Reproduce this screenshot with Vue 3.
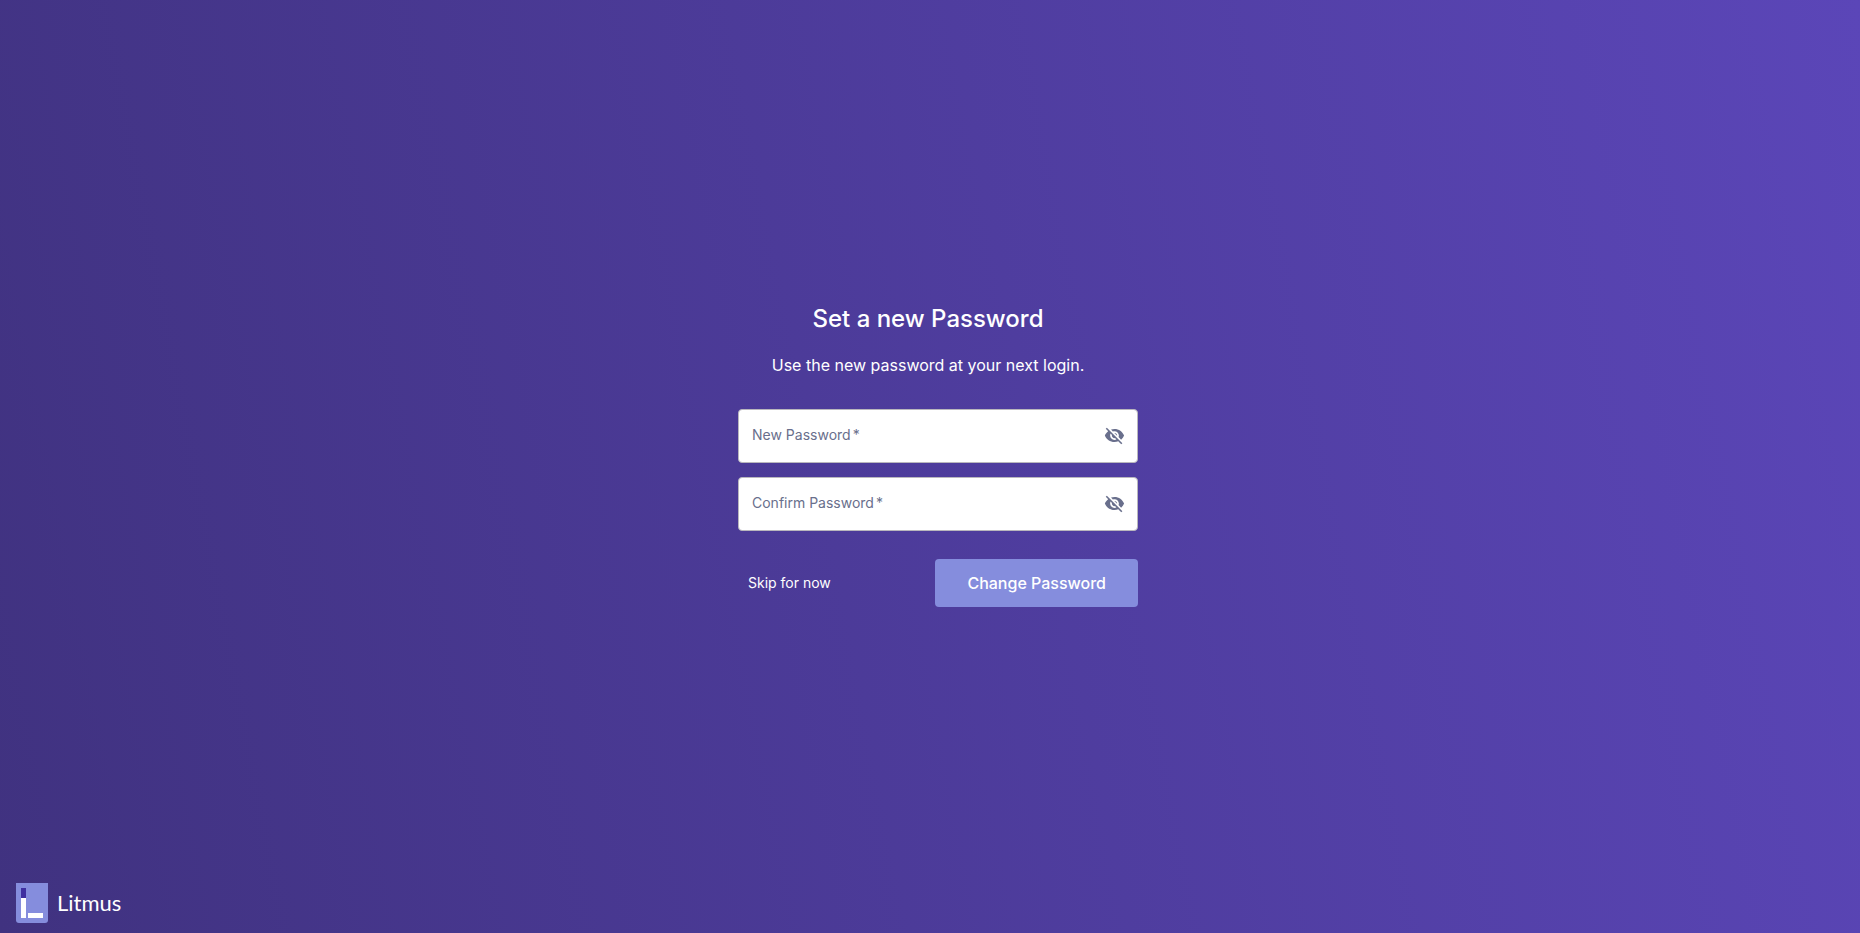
<script setup>
import { ref } from 'vue'

const fields = ref([
  { id: 'new-password', label: 'New Password', value: '', visible: false },
  { id: 'confirm-password', label: 'Confirm Password', value: '', visible: false },
])
</script>

<template>
  <div class="page">
    <main class="content">
      <header class="heading">
        <h1>Set a new Password</h1>
        <p>Use the new password at your next login.</p>
      </header>
      <form class="form" @submit.prevent>
        <div v-for="field in fields" :key="field.id" class="field">
          <div class="control">
            <input
              :id="field.id"
              v-model="field.value"
              :type="field.visible ? 'text' : 'password'"
              placeholder=" "
              required
            />
            <label :for="field.id">{{ field.label }}<span class="star">*</span></label>
          </div>
          <button
            type="button"
            class="toggle"
            aria-label="Toggle password visibility"
            @click="field.visible = !field.visible"
          >
            <svg viewBox="0 0 24 24" aria-hidden="true">
              <path
                d="M12 7c2.76 0 5 2.24 5 5 0 .65-.13 1.26-.36 1.83l2.92 2.92c1.51-1.26 2.7-2.89 3.43-4.75-1.73-4.39-6-7.5-11-7.5-1.4 0-2.74.25-3.98.7l2.16 2.16C10.74 7.13 11.35 7 12 7zM2 4.27l2.28 2.28.46.46C3.08 8.3 1.78 10.02 1 12c1.73 4.39 6 7.5 11 7.5 1.55 0 3.03-.3 4.38-.84l.42.42L19.73 22 21 20.73 3.27 3 2 4.27zM7.53 9.8l1.55 1.55c-.05.21-.08.43-.08.65 0 1.66 1.34 3 3 3 .22 0 .44-.03.65-.08l1.55 1.55c-.67.33-1.41.53-2.2.53-2.76 0-5-2.24-5-5 0-.79.2-1.53.53-2.2zm4.31-.78l3.15 3.15.02-.16c0-1.66-1.34-3-3-3l-.17.01z"
              />
            </svg>
          </button>
        </div>
        <div class="actions">
          <button type="button" class="skip">Skip for now</button>
          <button type="submit" class="submit">Change Password</button>
        </div>
      </form>
    </main>
    <footer class="brand">
      <svg class="mark" viewBox="0 0 32 40" aria-hidden="true">
        <path fill="#858ddd" d="M0 0h32v37a3 3 0 0 1-3 3H3a3 3 0 0 1-3-3z" />
        <path fill="#3f2fa0" d="M5 5h5v10H5z" />
        <path fill="#fff" d="M5 15h5v20H5zM12 30h15v5H12z" />
      </svg>
      <span class="name">Litmus</span>
    </footer>
  </div>
</template>

<style>
body {
  margin: 0;
}
</style>

<style scoped>
.page {
  box-sizing: border-box;
  min-height: 100vh;
  display: grid;
  grid-template-rows: 1fr auto;
  padding: 0 16px 10px;
  background: linear-gradient(79deg, #403280 0%, #5b46b8 100%);
  color: #fff;
  font-family: Inter, "Liberation Sans", sans-serif;
}

.content {
  display: flex;
  flex-direction: column;
  align-items: center;
  justify-content: center;
  padding-top: 26px;
}

.heading {
  text-align: center;
  margin-right: 4px;
}

h1 {
  margin: 0;
  font-size: 24px;
  line-height: 32px;
  font-weight: 500;
}

p {
  margin: 18px 0 32px;
  font-size: 16px;
  line-height: 24px;
}

.form {
  width: 400px;
  max-width: 100%;
  margin-left: 16px;
}

.field {
  box-sizing: border-box;
  display: flex;
  align-items: center;
  height: 54px;
  margin-bottom: 14px;
  padding: 0 12px 0 13px;
  border: 1px solid #b9b7bd;
  border-radius: 4px;
  background: #fff;
  color: #696f8c;
}

.control {
  flex: 1;
  display: grid;
  align-items: center;
}

.control > * {
  grid-area: 1 / 1;
}

input {
  min-width: 0;
  padding: 0;
  border: 0;
  outline: 0;
  background: transparent;
  color: #1c0732;
  font: 14px/24px Inter, sans-serif;
}

label {
  pointer-events: none;
  font-size: 14px;
  line-height: 24px;
  padding-bottom: 2px;
}

input:not(:placeholder-shown) + label {
  visibility: hidden;
}

.star {
  margin-left: 2px;
}

button {
  border: 0;
  background: none;
  color: inherit;
  font-family: inherit;
  cursor: pointer;
}

.toggle {
  display: flex;
  padding: 0;
}

.toggle svg {
  width: 21px;
  height: 21px;
  fill: #696f8c;
}

.actions {
  display: flex;
  align-items: center;
  justify-content: space-between;
  margin-top: 28px;
}

.skip {
  padding: 8px 10px;
  font-size: 14px;
  line-height: 24px;
}

.submit {
  padding: 12px 32px;
  border-radius: 4px;
  background: #858ddd;
  font-size: 16px;
  line-height: 24px;
  font-weight: 500;
}

.brand {
  display: flex;
  align-items: center;
  gap: 9px;
}

.mark {
  width: 32px;
  height: 40px;
}

.name {
  font-family: Lato, sans-serif;
  font-size: 22px;
  line-height: 32px;
}
</style>
